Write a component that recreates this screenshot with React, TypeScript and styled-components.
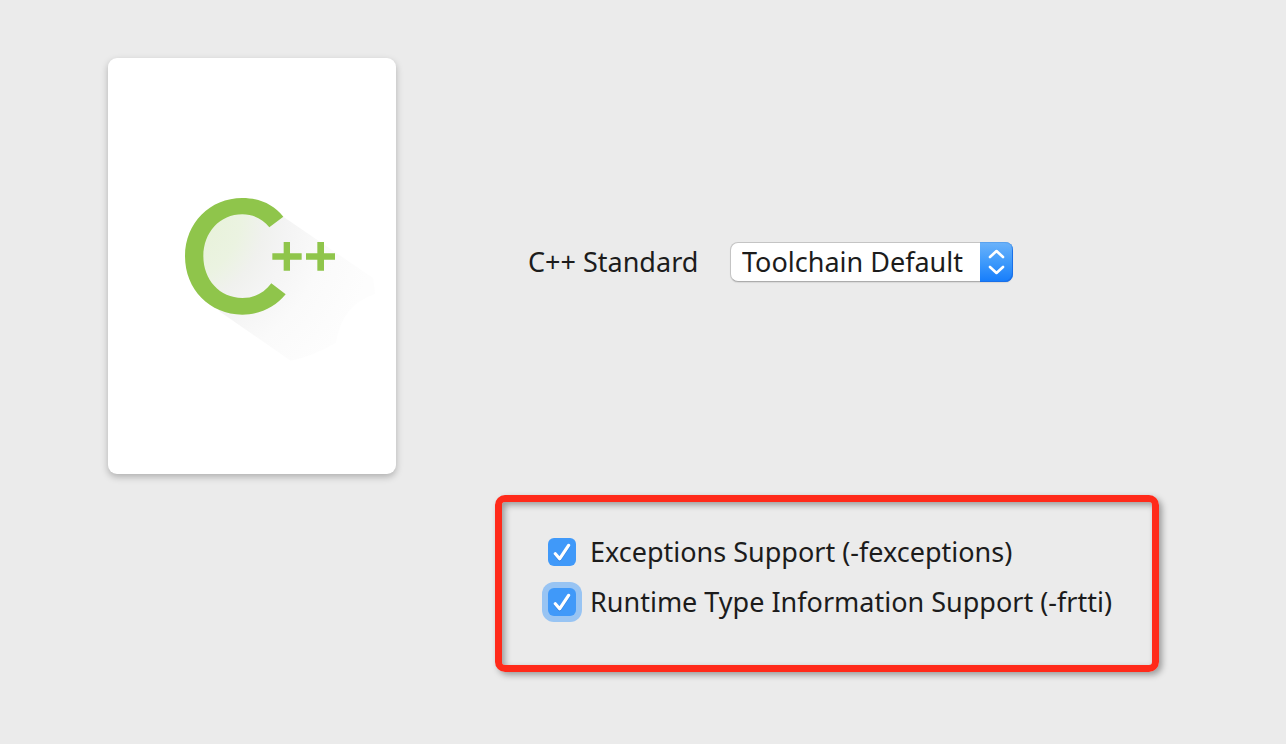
import React, { useState } from "react";
import styled, { createGlobalStyle } from "styled-components";

const GlobalStyle = createGlobalStyle`
  *, *::before, *::after { box-sizing: border-box; }
  body {
    margin: 0;
    background: #ebebeb;
    color: #1c1c1c;
    font-family: "Noto Sans", sans-serif;
    font-size: 27px;
    line-height: 40px;
  }
`;

const Page = styled.main`
  display: flex;
  align-items: flex-start;
  gap: 99px;
  min-height: 100vh;
  padding: 58px 127px 58px 108px;
`;

const PreviewCard = styled.div`
  display: flex;
  flex: 0 0 288px;
  height: 416px;
  border-radius: 9px;
  background: #ffffff;
  box-shadow: 0 3px 7px rgba(0, 0, 0, 0.25);
`;

const Logo = styled.svg`
  width: 100%;
  height: 100%;
`;

const Options = styled.form`
  display: flex;
  flex: 1;
  flex-direction: column;
  gap: 213px;
  padding-top: 184px;
`;

const StandardRow = styled.div`
  display: flex;
  align-items: center;
  gap: 26px;
  padding-left: 33px;
`;

const FieldLabel = styled.label`
  min-width: 176px;
`;

const SelectFrame = styled.div`
  display: grid;
  grid-template-columns: 1fr 33px;
  width: 283px;
  height: 40px;
`;

const Select = styled.select`
  grid-area: 1 / 1 / 2 / 3;
  appearance: none;
  width: 100%;
  height: 100%;
  padding: 0 33px 0 11px;
  border: 1px solid #c4c4c4;
  border-bottom-color: #acacac;
  border-radius: 8px;
  background: #ffffff;
  box-shadow: 0 1px 1px rgba(0, 0, 0, 0.08);
  color: inherit;
  font: inherit;
  line-height: 36px;
  outline: none;
`;

const Stepper = styled.svg`
  grid-area: 1 / 2;
  z-index: 1;
  width: 33px;
  height: 40px;
  border-radius: 0 8px 8px 0;
  background: linear-gradient(#6cb3fa, #3f9afb 50%, #157cfb);
  box-shadow: inset 0 1px 0 #5aa2ee, inset -1px -1px 0 #1a70e8;
  pointer-events: none;
`;

const Flags = styled.fieldset`
  display: flex;
  flex-direction: column;
  gap: 10px;
  min-width: 0;
  margin: 0;
  padding: 30px 39px 43px 46px;
  border: 7px solid #ff2a1a;
  border-radius: 10px;
  box-shadow: 3px 3px 6px rgba(0, 0, 0, 0.34), inset 3px 3px 6px rgba(0, 0, 0, 0.34);
`;

const FlagRow = styled.label`
  display: flex;
  align-items: center;
  gap: 14px;
  white-space: nowrap;
`;

const Box = styled.span`
  display: grid;
  width: 28px;
  height: 28px;
`;

const Checkbox = styled.input<{ $ring?: boolean }>`
  grid-area: 1 / 1;
  appearance: none;
  width: 28px;
  height: 28px;
  margin: 0;
  border-radius: 6px;
  outline: none;
  background: #ffffff;
  box-shadow: ${(p) => (p.$ring ? "0 0 0 6px #98c4f3" : "none")};

  &:checked {
    background: #4099f9;
  }
`;

const Tick = styled.svg`
  grid-area: 1 / 1;
  z-index: 1;
  filter: drop-shadow(0 1px 0 rgba(20, 90, 180, 0.35));
  pointer-events: none;
`;

function CppLogo() {
  return (
    <Logo viewBox="-186 -366 864 1248" role="img" aria-label="C++">
      <defs>
        <radialGradient id="shade" gradientUnits="userSpaceOnUse" cx="20" cy="110" r="600">
          <stop offset="0.15" stopColor="#e8f2da" />
          <stop offset="0.32" stopColor="#ebf3e1" />
          <stop offset="0.44" stopColor="#f0f1ee" />
          <stop offset="0.55" stopColor="#f4f4f4" />
          <stop offset="0.75" stopColor="#fafafa" />
          <stop offset="1" stopColor="#fdfdfd" />
        </radialGradient>
      </defs>
      <path
        d="M340 110 L610 295 L615 342 Q515 375 498 488 Q430 528 362 542 L150 395 L72 290 L80 160 L190 80 Z"
        fill="url(#shade)"
      />
      <path
        d="M340 110 C310 73 267 54 217 54 C119 54 45 130 45 229 C45 328 119 404 217 404 C270 404 316 381 347 343 L304 310 C283 338 254 354 217 354 C149 354 100 299 100 229 C100 158 149 103 217 103 C251 103 279 117 298 142 Z"
        fill="#8fc54b"
      />
      <path
        d="M341 186h19v34h35v19h-35v33h-19v-33h-34v-19h34z M442 186h20v34h33v19h-33v33h-20v-33h-34v-19h34z"
        fill="#8fc54b"
      />
    </Logo>
  );
}

interface FlagProps {
  label: string;
  ring?: boolean;
}

function Flag({ label, ring }: FlagProps) {
  const [checked, setChecked] = useState(true);
  return (
    <FlagRow>
      <Box>
        <Checkbox
          type="checkbox"
          checked={checked}
          onChange={() => setChecked(!checked)}
          $ring={ring}
        />
        {checked && (
          <Tick width="28" height="28" viewBox="0 0 28 28" fill="none" aria-hidden="true">
            <path
              d="M7.3 15.8 L11.6 20.8 L20.6 7.4"
              stroke="#ffffff"
              strokeWidth="3.2"
              strokeLinecap="round"
              strokeLinejoin="round"
            />
          </Tick>
        )}
      </Box>
      {label}
    </FlagRow>
  );
}

export default function App() {
  return (
    <>
      <GlobalStyle />
      <Page>
        <PreviewCard>
          <CppLogo />
        </PreviewCard>
        <Options>
          <StandardRow>
            <FieldLabel htmlFor="standard">C++ Standard</FieldLabel>
            <SelectFrame>
              <Select id="standard" defaultValue="default">
                <option value="default">Toolchain Default</option>
              </Select>
              <Stepper viewBox="0 0 33 40" fill="none" aria-hidden="true">
                <path
                  d="M10 15 L16.5 9 L23 15 M10 25 L16.5 31 L23 25"
                  stroke="#ffffff"
                  strokeWidth="2.6"
                  strokeLinecap="round"
                  strokeLinejoin="round"
                />
              </Stepper>
            </SelectFrame>
          </StandardRow>
          <Flags>
            <Flag label="Exceptions Support (-fexceptions)" />
            <Flag label="Runtime Type Information Support (-frtti)" ring />
          </Flags>
        </Options>
      </Page>
    </>
  );
}
